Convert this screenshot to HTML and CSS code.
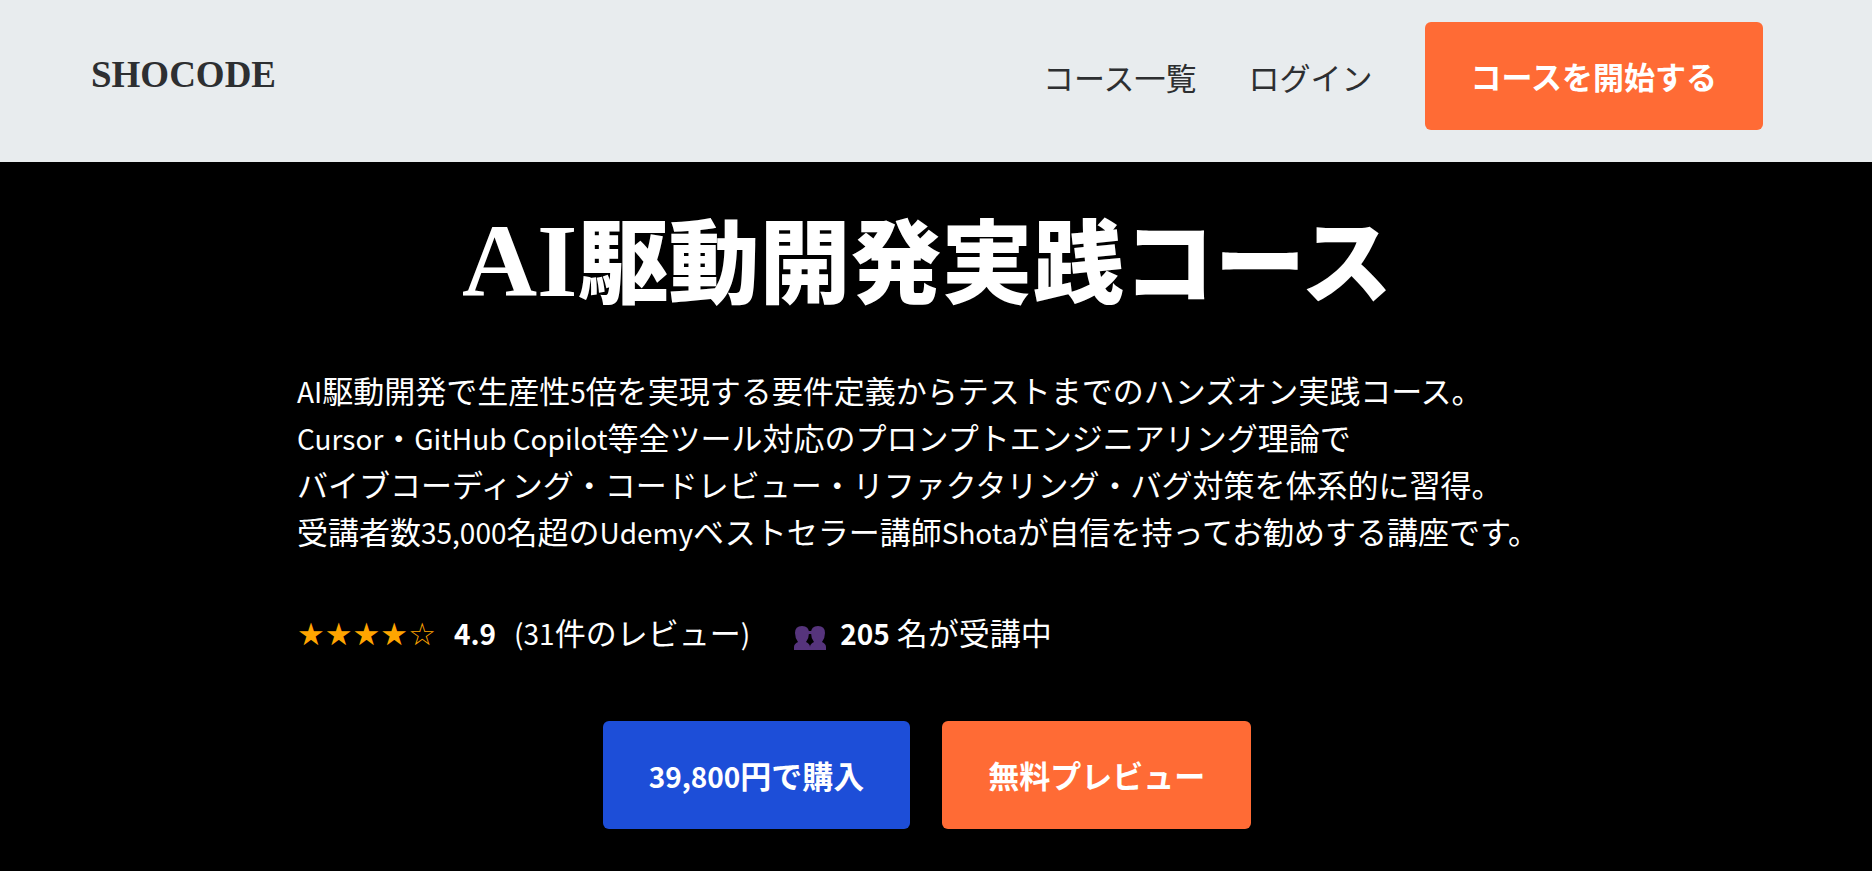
FILE: index.html
```html
<!DOCTYPE html>
<html lang="ja">
    <head>
        <meta charset="utf-8">
        <meta name="viewport" content="width=device-width, initial-scale=1">
        <title>AI駆動開発実践コース | SHOCODE</title>
        <link rel="stylesheet" href="styles.css">
    </head>
    <body>
        <header class="header">
            <a class="logo" href="#">SHOCODE</a>
            <nav class="nav">
                <a class="nav-link" href="#">コース一覧</a>
                <a class="nav-link" href="#">ログイン</a>
                <a class="btn btn-orange" href="#">コースを開始する</a>
            </nav>
        </header>
        <main class="hero">
            <div class="hero-inner">
                <h1 class="title"><span class="title-latin">AI</span>駆動開発実践コース</h1>
                <p class="lead">
                    <span class="latin">AI</span>駆動開発で生産性<span class="latin">5</span>倍を実現する要件定義からテストまでのハンズオン実践コース。<br>
                    <span class="latin">Cursor</span>・<span class="latin">GitHub Copilot</span>等全ツール対応のプロンプトエンジニアリング理論で<br>
                    バイブコーディング・コードレビュー・リファクタリング・バグ対策を体系的に習得。<br>
                    受講者数<span class="latin">35,000</span>名超の<span class="latin">Udemy</span>ベストセラー講師<span class="latin">Shota</span>が自信を持ってお勧めする講座です。
                </p>
                <div class="stats">
                    <div class="rating">
                        <span class="stars">★★★★☆</span>
                        <strong class="latin">4.9</strong>
                        <span><span class="latin">(31</span>件のレビュー<span class="latin">)</span></span>
                    </div>
                    <div class="students">
                        <svg class="people" viewBox="0 0 32 38" aria-hidden="true">
                            <path d="M0 37v-3q0-3 4-5Q1 25 1 20q0-7 7-7t7 7q0 5-3 9 4 2 4 5v3z"/>
                            <path d="M16 37v-3q0-3 4-5-3-4-3-9 0-7 7-7t7 7q0 5-3 9 4 2 4 5v3z"/>
                            <path d="M14 18h4v3h-4z"/>
                        </svg>
                        <span><strong class="latin">205</strong> 名が受講中</span>
                    </div>
                </div>
                <div class="actions">
                    <button class="btn btn-blue" type="button"><span class="latin">39,800</span>円で購入</button>
                    <button class="btn btn-orange" type="button">無料プレビュー</button>
                </div>
            </div>
        </main>
    </body>
</html>
```
FILE: styles.css
```css
* {
    box-sizing: border-box;
}

body {
    margin: 0;
    min-height: 100vh;
    display: flex;
    flex-direction: column;
    background: #000;
    color: #fff;
    font-family: "Noto Sans CJK JP", sans-serif;
    font-size: 31px;
    line-height: 47px;
}

.header {
    display: flex;
    align-items: center;
    justify-content: space-between;
    padding: 22px 109px 32px 91px;
    background: #e8ecee;
}

.logo {
    padding-bottom: 4px;
    color: #2d2f31;
    font-family: "Liberation Serif", serif;
    font-size: 37px;
    font-weight: bold;
    text-decoration: none;
}

.nav {
    display: flex;
    align-items: center;
}

.nav-link {
    margin-right: 52px;
    color: #2d2f31;
    text-decoration: none;
}

.btn {
    display: block;
    height: 108px;
    padding: 0 46px;
    border: 0;
    border-radius: 6px;
    color: #fff;
    font: inherit;
    font-weight: bold;
    line-height: 108px;
    text-decoration: none;
    cursor: pointer;
}

.btn-orange {
    background: #ff6b35;
}

.btn-blue {
    background: #1d4ed8;
}

.hero {
    flex: 1;
    padding: 40px 18px 40px 0;
}

.hero-inner {
    max-width: 1260px;
    margin: 0 auto;
}

.title {
    margin: 0 0 56px;
    font-size: 91px;
    font-weight: 900;
    line-height: 108px;
    text-align: center;
}

.title-latin {
    font-family: "Liberation Serif", serif;
    font-size: 104px;
    font-weight: bold;
    line-height: 0;
}

/* Latin text and figures sit a size below the kana */
.latin {
    font-size: 28px;
    line-height: 0;
}

.lead {
    margin: 0 0 54px;
}

.stats {
    display: flex;
    gap: 44px;
    margin-bottom: 66px;
}

.rating,
.students {
    display: flex;
    gap: 18px;
}

.rating {
    align-items: baseline;
}

.students {
    align-items: center;
    gap: 14px;
}

.stars {
    color: #ffa500;
    font-family: "DejaVu Sans", sans-serif;
    line-height: 1;
}

.people {
    width: 32px;
    height: 38px;
    fill: #56347c;
}

.actions {
    display: flex;
    justify-content: center;
    gap: 32px;
}
```
